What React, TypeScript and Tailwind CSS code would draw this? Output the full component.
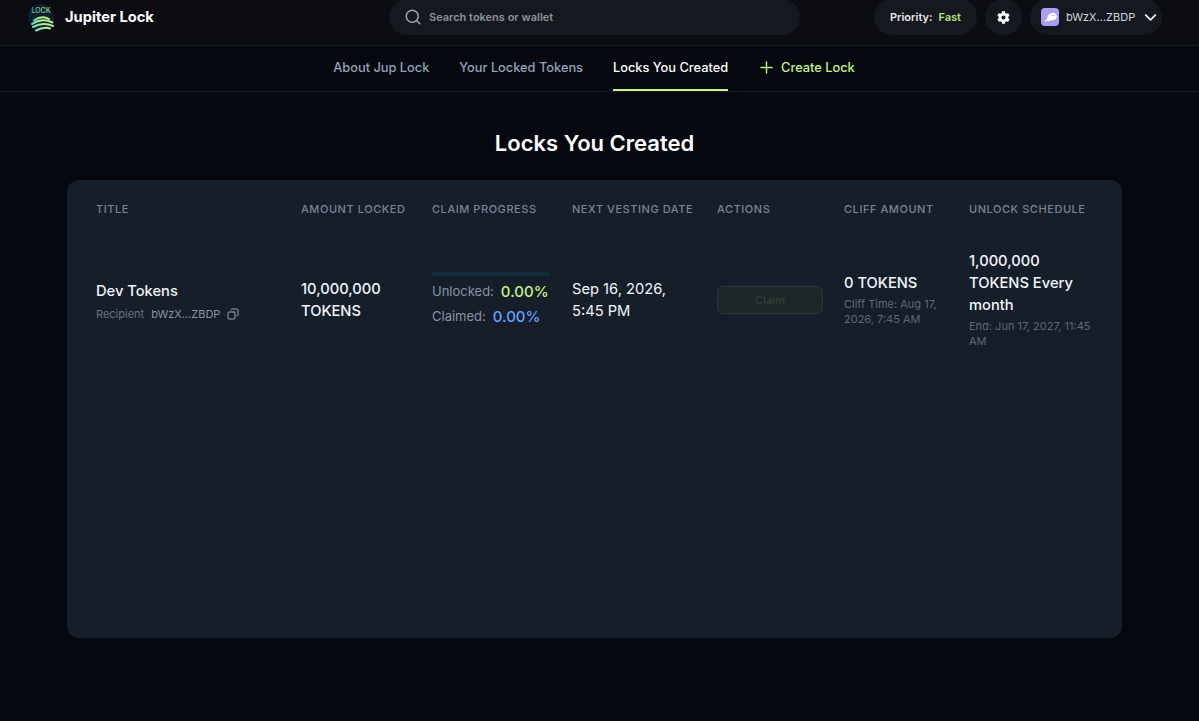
import { ChevronDown, Copy, Plus, Search } from "lucide-react";
import { FaCog } from "react-icons/fa";

const columns = [
    "Title",
    "Amount Locked",
    "Claim Progress",
    "Next Vesting Date",
    "Actions",
    "Cliff Amount",
    "Unlock Schedule",
];

function Logo() {
    return (
        <svg width="26" height="32" viewBox="0 0 26 32" className="shrink-0">
            <circle cx="13" cy="16" r="13" fill="#10202b" />
            <defs>
                <linearGradient id="lockText" x1="0" x2="1">
                    <stop offset="0" stopColor="#38bdc8" />
                    <stop offset="1" stopColor="#b5e07a" />
                </linearGradient>
                <linearGradient id="waves" x1="0" x2="1" y1="1" y2="0">
                    <stop offset="0" stopColor="#5fe0c0" />
                    <stop offset="1" stopColor="#c7f284" />
                </linearGradient>
            </defs>
            <text x="13" y="12" textAnchor="middle" fontSize="7" fontWeight="500" fontFamily="Inter, sans-serif" fill="url(#lockText)">
                LOCK
            </text>
            <g fill="none" stroke="url(#waves)" strokeWidth="2" strokeLinecap="round">
                <path d="M6 19.500 Q14 14 21 18" />
                <path d="M4 23 Q14 16.500 24.500 21.500" />
                <path d="M5 26 Q15 20.500 25 25" />
                <path d="M8 29.500 Q16 25.500 22 27.500" />
            </g>
        </svg>
    );
}

function Header() {
    return (
        <header className="flex h-[46px] items-center border-b border-[#181c24] bg-[#0b0d12] pr-[37px] pb-[11px] pl-[28px]">
            <div className="flex w-[361px] items-center gap-[11px]">
                <Logo />
                <span className="text-[14.7px] font-bold text-white">Jupiter Lock</span>
            </div>
            <div className="flex h-[36px] w-[411px] shrink-0 items-center gap-[7px] rounded-full bg-[#15181e] pl-[15px]">
                <Search size={18} className="text-[#9ca3af]" />
                <span className="text-[11px] font-semibold text-[#8b919c]">Search tokens or wallet</span>
            </div>
            <div className="ml-auto flex items-center gap-[8px]">
                <div className="flex h-[36px] items-center gap-[6px] rounded-full bg-[#15181e] px-[16px] text-[11px] font-semibold">
                    <span className="text-[#e5e7eb]">Priority:</span>
                    <span className="text-[#b4e27e]">Fast</span>
                </div>
                <div className="flex h-[36px] w-[37px] items-center justify-center rounded-full bg-[#15181e]">
                    <FaCog size={13} className="text-white" />
                </div>
                <div className="flex h-[36px] w-[132px] items-center gap-[7px] rounded-full bg-[#15181e] pl-[11px]">
                    <svg width="18" height="18" viewBox="0 0 18 18" className="shrink-0">
                        <rect width="18" height="18" rx="4" fill="#ab9ff2" />
                        <path
                            d="M3 13.200C5 13 5.800 11 6.500 9 7.300 6.600 9.500 4.800 12 4.800c2.500 0 3.800 1.800 3.800 3.700 0 2.800-2.600 3.800-4.400 3.800-.5 0-.9-.2-1.100-.5-.6.900-1.500 1.300-2.500 1.300-.6 0-.9-.4-1.300-.4-.8.800-2.500 1-3.500.5z"
                            fill="#fff"
                        />
                        <circle cx="11" cy="7.500" r=".7" fill="#ab9ff2" />
                        <circle cx="13.400" cy="7.500" r=".7" fill="#ab9ff2" />
                    </svg>
                    <span className="text-[11px] font-normal whitespace-nowrap text-[#d1d5db]">bWzX...ZBDP</span>
                    <ChevronDown size={19} strokeWidth={2.5} className="-ml-[1px] shrink-0 text-[#e5e7eb]" />
                </div>
            </div>
        </header>
    );
}

function Tabs() {
    return (
        <nav className="flex h-[46px] items-stretch justify-center gap-[30px] border-b border-[#181c24] pr-[11px] text-[12.8px] font-medium">
            <a className="flex items-center border-b-2 border-transparent text-[#94a3b8]">About Jup Lock</a>
            <a className="flex items-center border-b-2 border-transparent text-[#94a3b8]">Your Locked Tokens</a>
            <a className="flex items-center border-b-2 border-[#c7f284] text-white">Locks You Created</a>
            <a className="-ml-[1px] flex items-center gap-[5px] border-b-2 border-transparent text-[#c7f284]">
                <Plus size={19} strokeWidth={1.75} />
                Create Lock
            </a>
        </nav>
    );
}

function LockTable() {
    return (
        <div className="ml-[67px] h-[458px] w-[1055px] rounded-xl bg-[#161e2a] pl-[29px]">
            <div className="grid h-[59px] grid-cols-[205px_131px_140px_145px_127px_125px_1fr] items-center pr-[20px] text-[11px] font-medium tracking-[0.05em] whitespace-nowrap text-[#7b8494] uppercase">
                {columns.map((column) => (
                    <div key={column}>{column}</div>
                ))}
            </div>
            <div className="grid grid-cols-[205px_131px_140px_145px_127px_125px_1fr] items-center pt-[11px] pr-[28px] text-[14.7px] leading-[22px] font-medium text-[#f1f5f9]">
                <div className="pt-[5px]">
                    <div className="text-[#f1f5f9]">Dev Tokens</div>
                    <div className="mt-[1px] flex items-center gap-[7px] text-[11px] leading-[22px] font-normal">
                        <span className="text-[#6b7280]">Recipient</span>
                        <span className="text-[#8b93a1]">bWzX...ZBDP</span>
                        <Copy size={12} className="-scale-x-100 text-[#9ca3af]" />
                    </div>
                </div>
                <div className="pr-[20px]">10,000,000 TOKENS</div>
                <div className="w-[118px]">
                    <div className="mt-[2px] mb-[3px] h-[4px] bg-[#132c38]" />
                    <div className="flex items-center gap-[7px] text-[13px] leading-[25px] font-normal text-[#8b93a1]">
                        Unlocked:
                        <span className="text-[15px] font-medium text-[#c7f284]">0.00%</span>
                    </div>
                    <div className="flex items-center gap-[7px] text-[13px] leading-[25px] font-normal text-[#8b93a1]">
                        Claimed:
                        <span className="text-[15px] font-medium text-[#60a5fa]">0.00%</span>
                    </div>
                </div>
                <div className="pt-[1px] pr-[20px] font-normal">Sep 16, 2026, 5:45 PM</div>
                <div>
                    <button className="h-[28px] w-[106px] rounded-md border border-[#2b3638] bg-[#1d2729] text-[11px] font-semibold text-[#2f3d34]">
                        Claim
                    </button>
                </div>
                <div className="pr-[6px]">
                    <div>0 TOKENS</div>
                    <div className="mt-[3px] text-[11px] leading-[15px] font-normal text-[#5f6875]">
                        Cliff Time: Aug 17, 2026, 7:45 AM
                    </div>
                </div>
                <div>
                    <div>1,000,000 TOKENS Every month</div>
                    <div className="mt-[3px] text-[11px] leading-[15px] font-normal text-[#5f6875]">
                        End: Jun 17, 2027, 11:45 AM
                    </div>
                </div>
            </div>
        </div>
    );
}

export default function App() {
    return (
        <div className="h-[721px] overflow-hidden bg-[#05080e] font-['Inter',sans-serif]">
            <Header />
            <Tabs />
            <h1 className="pt-[35px] pr-[10px] pb-[21px] text-center text-[22px] leading-[32px] font-semibold text-white">
                Locks You Created
            </h1>
            <LockTable />
        </div>
    );
}
